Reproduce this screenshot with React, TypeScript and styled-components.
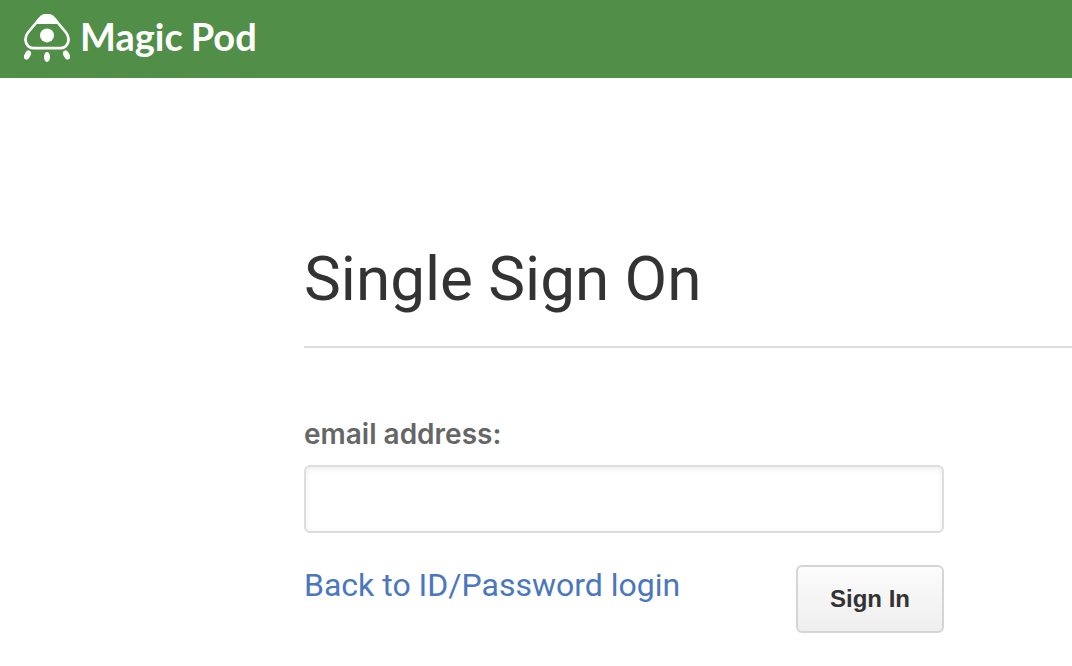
import React from "react";
import styled, { createGlobalStyle } from "styled-components";

const GlobalStyle = createGlobalStyle`
  * { box-sizing: border-box; }
  body {
    margin: 0;
    background: #fff;
    color: #333;
    font-family: Roboto, "Liberation Sans", sans-serif;
  }
`;

const Header = styled.header`
  display: flex;
  align-items: flex-start;
  height: 78px;
  padding: 14px 24px;
  background: #518e47;
`;

const Brand = styled.a`
  display: flex;
  align-items: flex-start;
  gap: 10px;
  color: #fff;
  text-decoration: none;
`;

const Wordmark = styled.span`
  display: flex;
  gap: 8px;
  font: 700 38px/44px Lato, sans-serif;
`;

const Main = styled.main`
  padding: 168px 0 32px 304px;
`;

const Title = styled.h1`
  margin: 0;
  padding-bottom: 34px;
  border-bottom: 2px solid #ddd;
  font-size: 62px;
  font-weight: 400;
  line-height: 66px;
  white-space: nowrap;
`;

const Form = styled.form`
  display: flex;
  flex-direction: column;
  width: 100%;
  max-width: 640px;
  padding-top: 68px;
`;

const Label = styled.label`
  margin-bottom: 13px;
  color: #666;
  font: 600 28px/36px Inter, "Liberation Sans", sans-serif;
`;

const TextInput = styled.input`
  width: 100%;
  height: 68px;
  padding: 0 16px;
  border: 2px solid #ddd;
  border-radius: 6px;
  background: #fff;
  box-shadow: inset 0 2px 6px rgba(0, 0, 0, 0.07);
  color: #333;
  font: 400 28px Roboto, sans-serif;
  outline: none;
`;

const Actions = styled.div`
  display: flex;
  align-items: flex-start;
  justify-content: space-between;
  margin-top: 32px;
`;

const BackLink = styled.a`
  color: #4b77be;
  font-size: 32px;
  line-height: 40px;
  text-decoration: none;
  white-space: nowrap;
`;

const SubmitButton = styled.button`
  height: 68px;
  padding: 0 32px;
  border: 2px solid #d5d5d5;
  border-radius: 6px;
  background: linear-gradient(#fcfcfc, #eee);
  color: #333;
  font: 700 24px "Liberation Sans", Arial, sans-serif;
  white-space: nowrap;
`;

const Logo = () => (
  <svg width="46" height="48" viewBox="0 0 46 48" fill="#fff" aria-hidden="true">
    <path
      d="M17.5 2.7 Q23 -0.6 28.5 2.7 Q31 5 34 9 L42 18.5 C47 25 44 34.2 36 34.2 H10 C2 34.2 -1 25 4 18.5 L12 9 Q15 5 17.5 2.7Z"
      fill="none"
      stroke="#fff"
      strokeWidth="2.7"
      strokeLinejoin="round"
    />
    <path d="M11.5 10 Q15 4.5 18 1.8 Q23 -1.4 28 1.8 Q31 4.5 34.5 10Z" />
    <circle cx="23" cy="21.4" r="7" />
    <ellipse cx="3.5" cy="41" rx="3" ry="4.9" transform="rotate(27 3.5 41)" />
    <ellipse cx="23" cy="43" rx="3" ry="5" />
    <ellipse cx="42.5" cy="41" rx="3" ry="4.9" transform="rotate(-27 42.5 41)" />
  </svg>
);

export default function App() {
  return (
    <>
      <GlobalStyle />
      <Header>
        <Brand href="#">
          <Logo />
          <Wordmark>
            <span>Magic</span>
            <span>Pod</span>
          </Wordmark>
        </Brand>
      </Header>
      <Main>
        <Title>Single Sign On</Title>
        <Form onSubmit={(event) => event.preventDefault()}>
          <Label htmlFor="email">email address:</Label>
          <TextInput id="email" type="email" name="email" />
          <Actions>
            <BackLink href="#">Back to ID/Password login</BackLink>
            <SubmitButton type="submit">Sign In</SubmitButton>
          </Actions>
        </Form>
      </Main>
    </>
  );
}
